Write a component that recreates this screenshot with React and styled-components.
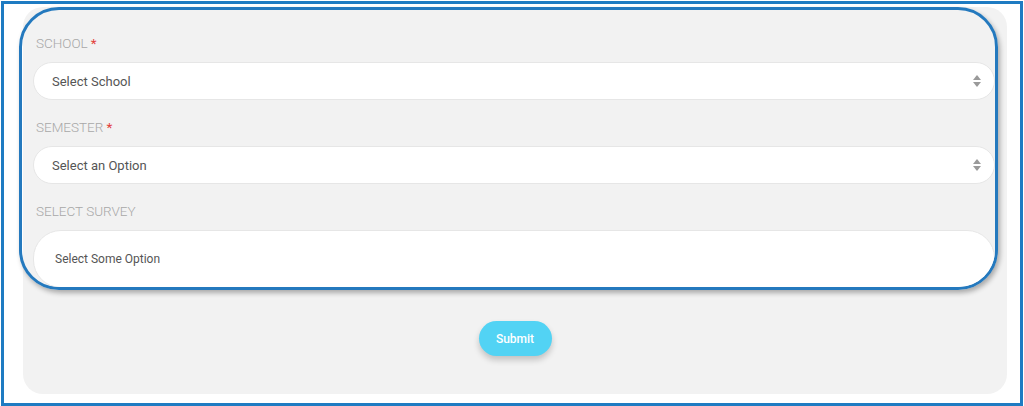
import styled, { createGlobalStyle } from 'styled-components';

const GlobalStyle = createGlobalStyle`
  html, body {
    margin: 0;
    padding: 0;
    background: #ffffff;
    font-family: Roboto, "Liberation Sans", Arial, sans-serif;
  }
`;

// Outer frame
const Frame = styled.div`
  box-sizing: border-box;
  width: 1022px;
  height: 405px;
  margin: 1px 0 0 1px;
  border: 3px solid #1e7bc2;
  padding: 3px 13px 9px 19px;
  background: #ffffff;
`;

const Card = styled.div`
  display: flex;
  flex-direction: column;
  align-items: center;
  height: 100%;
  box-sizing: border-box;
  background: #f2f2f2;
  border-radius: 20px;
`;

// Highlighted form area
const Highlight = styled.div`
  box-sizing: border-box;
  align-self: flex-start;
  flex-shrink: 0;
  width: 979px;
  height: 283px;
  margin-left: -4px;
  border: 3px solid #2479be;
  border-radius: 40px;
  box-shadow: 2px 3px 5px rgba(0, 0, 0, 0.3);
  padding: 24px 0 0 11px;
  overflow: hidden;
  display: flex;
  flex-direction: column;
`;

const Label = styled.div`
  flex-shrink: 0;
  font-size: 13.5px;
  font-weight: 300;
  line-height: 18px;
  color: #a8a8a8;
  text-transform: uppercase;
  margin: ${(p) => (p.$first ? '0' : '18px')} 0 10px 3px;
`;

const Star = styled.span`
  color: #e2403b;
  font-weight: 400;
  margin-left: 3px;
`;

const Select = styled.div`
  display: flex;
  align-items: center;
  justify-content: space-between;
  flex-shrink: 0;
  box-sizing: border-box;
  height: 38px;
  background: #ffffff;
  border: 1px solid #e6e6e6;
  border-radius: 19px;
  padding: 0 12px 0 18px;
  font-size: 13px;
  color: #555555;
`;

const MultiSelect = styled.div`
  display: flex;
  align-items: center;
  flex-shrink: 0;
  box-sizing: border-box;
  height: 58px;
  background: #ffffff;
  border: 1px solid #e6e6e6;
  border-radius: 28px;
  padding: 0 0 0 21px;
  font-size: 12px;
  color: #555555;
`;

const Arrows = () => (
  <svg width="10" height="14" viewBox="0 0 10 14">
    <path d="M1 6 L5 1 L9 6 Z" fill="#9a9a9a" />
    <path d="M1 8 L5 13 L9 8 Z" fill="#9a9a9a" />
  </svg>
);

const Submit = styled.button`
  margin-top: 31px;
  width: 73px;
  height: 35px;
  border: none;
  border-radius: 18px;
  background: #52d3f4;
  color: #ffffff;
  font-family: Roboto, "Liberation Sans", Arial, sans-serif;
  font-size: 12px;
  font-weight: 500;
  box-shadow: 0 4px 6px rgba(0, 0, 0, 0.2);
`;

function App() {
  return (
    <>
      <GlobalStyle />
      <Frame>
        <Card>
          <Highlight>
            <Label $first>
              School<Star>*</Star>
            </Label>
            <Select>
              Select School
              <Arrows />
            </Select>

            <Label>
              Semester<Star>*</Star>
            </Label>
            <Select>
              Select an Option
              <Arrows />
            </Select>

            <Label>Select Survey</Label>
            <MultiSelect>Select Some Option</MultiSelect>
          </Highlight>

          <Submit>Submit</Submit>
        </Card>
      </Frame>
    </>
  );
}

export default App;
